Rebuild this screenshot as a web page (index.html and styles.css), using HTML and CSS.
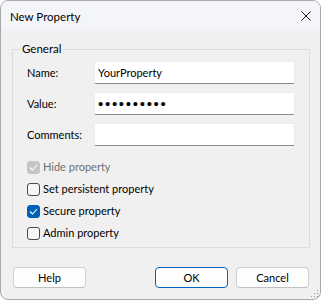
FILE: index.html
```html
<!DOCTYPE html>
<html lang="en">
<head>
    <meta charset="UTF-8">
    <title>New Property</title>
    <link rel="stylesheet" href="styles.css">
</head>
<body>
    <div class="window">
        <div class="titlebar">
            <span class="title">New Property</span>
            <svg class="close" width="10" height="10" viewBox="0 0 10 10">
                <path d="M0.5 0.5 L9.5 9.5 M9.5 0.5 L0.5 9.5" stroke="#1a1a1a" stroke-width="1" fill="none"/>
            </svg>
        </div>

        <div class="content">
            <fieldset class="group">
                <legend>General</legend>

                <div class="fields">
                    <label class="field-label">Name:</label>
                    <input class="field" type="text" value="YourProperty">
                    <label class="field-label">Value:</label>
                    <input class="field secret" type="password" value="abcdefghij">
                    <label class="field-label">Comments:</label>
                    <input class="field" type="text" value="">
                </div>

                <div class="checks">
                    <label class="check disabled">
                        <span class="box on">
                            <svg width="9" height="7" viewBox="0 0 9 7"><path d="M1 3.5 L3.5 6 L8 1" stroke="#fff" stroke-width="1.1" fill="none"/></svg>
                        </span>
                        Hide property
                    </label>
                    <label class="check">
                        <span class="box"></span>
                        Set persistent property
                    </label>
                    <label class="check">
                        <span class="box on">
                            <svg width="9" height="7" viewBox="0 0 9 7"><path d="M1 3.5 L3.5 6 L8 1" stroke="#fff" stroke-width="1.1" fill="none"/></svg>
                        </span>
                        Secure property
                    </label>
                    <label class="check">
                        <span class="box"></span>
                        Admin property
                    </label>
                </div>
            </fieldset>

            <div class="buttons">
                <button class="btn">Help</button>
                <span class="spacer"></span>
                <button class="btn default">OK</button>
                <button class="btn">Cancel</button>
            </div>
        </div>

        <svg class="grip" width="8" height="8" viewBox="0 0 8 8">
            <rect x="6" y="0" width="1" height="1" fill="#9a9a9a"/>
            <rect x="3" y="3" width="1" height="1" fill="#9a9a9a"/>
            <rect x="6" y="3" width="1" height="1" fill="#9a9a9a"/>
            <rect x="0" y="6" width="1" height="1" fill="#9a9a9a"/>
            <rect x="3" y="6" width="1" height="1" fill="#9a9a9a"/>
            <rect x="6" y="6" width="1" height="1" fill="#9a9a9a"/>
        </svg>
    </div>
</body>
</html>
```

FILE: styles.css
```css
body {
    margin: 0;
    background-color: #ffffff;
    font-family: Lato, "Noto Sans", sans-serif;
    font-size: 11px;
    color: #000000;
}

.window {
    position: relative;
    width: 321px;
    height: 300px;
    box-sizing: border-box;
    border: 1px solid #a9a9a9;
    border-radius: 8px;
    overflow: hidden;
    background-color: #f0f0f0;
}

.titlebar {
    height: 30px;
    display: flex;
    align-items: center;
    justify-content: space-between;
    padding: 0 9px 0 9px;
    background-color: #f4f5f8;
}

.title {
    font-size: 11.5px;
    color: #000000;
}

.close {
    margin-top: -1px;
}

.content {
    padding: 10px 10px 0 11px;
}

.group {
    margin: 0;
    padding: 4px 14px 3px 14px;
    border: 1px solid #dcdcdc;
    border-radius: 0;
    min-width: 0;
}

.group legend {
    padding: 0 2px;
    margin-left: -7px;
    line-height: 16px;
    font-size: 11.5px;
}

.fields {
    display: grid;
    grid-template-columns: 67px 201px;
    grid-auto-rows: 23px;
    row-gap: 8px;
    align-items: center;
}

.field-label {
    line-height: 16px;
}

.field {
    width: 100%;
    height: 23px;
    box-sizing: border-box;
    border: 1px solid #ececec;
    border-bottom-color: #8a8a8a;
    border-radius: 2px;
    background-color: #ffffff;
    padding: 0 3px;
    font-family: inherit;
    font-size: 11px;
    color: #000000;
    outline: none;
}

.secret {
    font-family: "Liberation Sans", sans-serif;
    font-size: 15px;
    letter-spacing: 1.7px;
    padding-left: 3px;
}

.checks {
    margin-top: 10px;
    display: flex;
    flex-direction: column;
}

.check {
    display: flex;
    align-items: center;
    gap: 3px;
    height: 22px;
    line-height: 16px;
}

.check.disabled {
    color: #6f6f6f;
}

.box {
    width: 13px;
    height: 13px;
    box-sizing: border-box;
    border: 1px solid #4a4a4a;
    border-radius: 3px;
    background-color: #f7f7f7;
    display: flex;
    align-items: center;
    justify-content: center;
}

.box.on {
    border-color: #005fb8;
    background-color: #005fb8;
}

.disabled .box.on {
    border-color: #c5c5c5;
    background-color: #c5c5c5;
}

.buttons {
    display: flex;
    gap: 8px;
    margin-top: 19px;
    padding-left: 1px;
    padding-right: 1px;
}

.spacer {
    flex: 1;
}

.btn {
    width: 73px;
    height: 21px;
    box-sizing: border-box;
    border: 1px solid #d0d0d0;
    border-bottom-color: #c0c0c0;
    border-radius: 4px;
    background-color: #fdfdfd;
    font-family: inherit;
    font-size: 11px;
    color: #000000;
    padding: 0;
}

.btn.default {
    border-color: #0067c0;
}

.grip {
    position: absolute;
    right: 1px;
    bottom: 1px;
}
```
